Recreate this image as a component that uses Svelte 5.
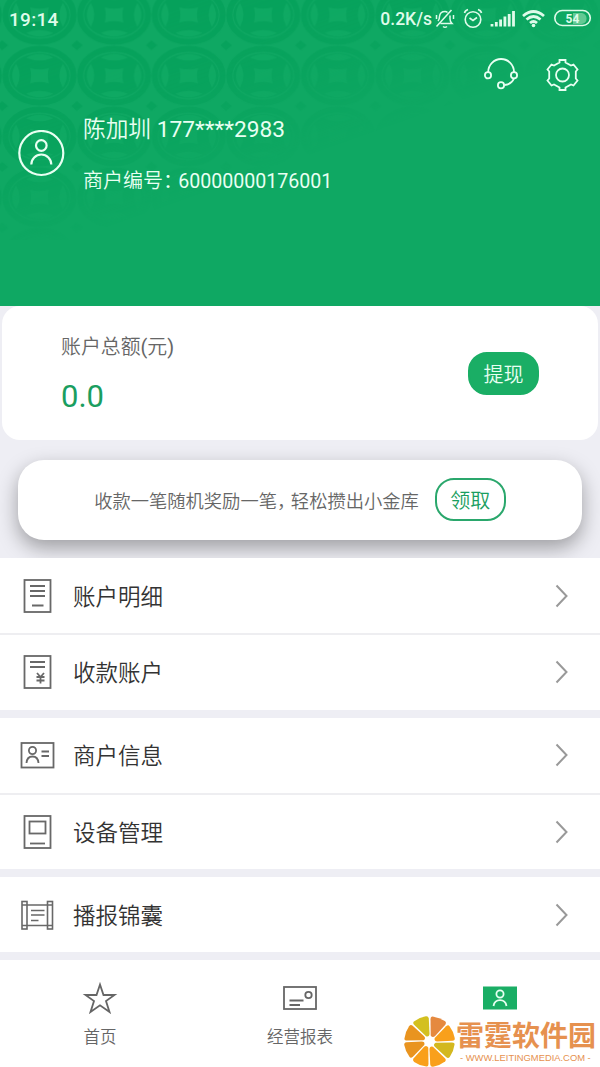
<script>
    const account = {
        name: '陈加圳',
        phone: '177****2983',
        merchantNo: '60000000176001',
        balance: '0.0'
    }
    const groups = [
        [
            { icon: 'detail', label: '账户明细' },
            { icon: 'payee', label: '收款账户' }
        ],
        [
            { icon: 'merchant', label: '商户信息' },
            { icon: 'device', label: '设备管理' }
        ],
        [
            { icon: 'scroll', label: '播报锦囊' }
        ]
    ]
    const tabs = [
        { icon: 'home', label: '首页' },
        { icon: 'report', label: '经营报表' },
        { icon: 'mine', label: '' }
    ]
    let active = 'mine'

    const slices = ['#e5893f', '#f9a01b', '#d3b81f', '#f9a01b', '#f9a01b', '#e9941f', '#e9941f', '#d3c01f']
</script>

<div class="app">
    <header class="header">
        <svg class="pattern" width="600" height="306" viewBox="0 0 600 306">
            <defs>
                <pattern id="coins" x="2.2" y="-15.500" width="74.6" height="60.8" patternUnits="userSpaceOnUse">
                    <ellipse cx="37.3" cy="30.4" rx="34" ry="27" fill="none" stroke="#06a15b" stroke-width="6" />
                    <ellipse cx="37.3" cy="30.4" rx="30" ry="22.500" fill="#06a15b" />
                    <g fill="#0fa963">
                        <path d="M24 12.500Q37.300 5 51 12.500Q37.300 18 24 12.500ZM24 48.300Q37.300 55.800 51 48.300Q37.300 42.800 24 48.300Z" />
                        <path d="M14 18.500Q6 30.400 14 42.300Q21 30.400 14 18.500ZM60.600 18.500Q68.600 30.400 60.600 42.300Q53.600 30.400 60.600 18.500Z" />
                        <path d="M28 23Q37.300 25.500 46.600 23Q44.500 30.400 46.600 38Q37.300 35.500 28 38Q30 30.400 28 23Z" />
                    </g>
                    <path d="M0 -5L6 0L0 5L-6 0ZM74.6 -5L80 0L74.6 5L69 0ZM0 55.8L6 60.8L0 66L-6 60.8ZM74.6 55.8L80 60.8L74.6 66L69 60.8Z" fill="#06a15b" />
                </pattern>
                <linearGradient id="fade" gradientUnits="userSpaceOnUse" x1="180" y1="0" x2="255" y2="210">
                    <stop offset="0" stop-color="#fff" />
                    <stop offset="0.38" stop-color="#fff" stop-opacity="0.75" />
                    <stop offset="0.85" stop-color="#fff" stop-opacity="0" />
                </linearGradient>
                <mask id="fadeMask">
                    <rect width="600" height="306" fill="url(#fade)" />
                </mask>
            </defs>
            <rect width="600" height="240" fill="url(#coins)" mask="url(#fadeMask)" />
        </svg>
        <div class="status">
            <span class="time">19:14</span>
            <span class="speed">0.2K/s</span>
            <svg class="statusIcons" width="164" height="24" viewBox="0 0 164 24" fill="none" stroke="#dffbea" stroke-width="1.6">
                <!-- muted bell -->
                <path d="M6 14Q7.500 12.500 7.500 9.500Q8 4.500 13 4.500Q14.500 4.500 15.500 5.500M18 8.500V12Q18 14.500 20 16.500H8.500M11 19.500Q13 21 15 19.500M4.500 19.500L19.500 3M4.500 8V12M21.500 8V12" stroke-width="1.500" />
                <!-- alarm -->
                <circle cx="41" cy="12.500" r="7.800" />
                <path d="M37.500 11L41 13.500L45 10.500M32.500 6Q33 3.500 36 2.500M49.500 6Q49 3.500 46 2.500" />
                <!-- signal -->
                <path d="M60 19.500V17M64.300 19.500V15M68.600 19.500V12.500M72.900 19.500V9.500M77.200 19.500V7M81.500 19.500V4" stroke-width="2.800" />
                <!-- wifi -->
                <path d="M91 9Q101.500 0 112 9M94.500 12.500Q101.500 6.500 108.500 12.500M98 16Q101.500 13 105 16" stroke-width="2.800" />
                <circle cx="101.500" cy="18.500" r="1.800" fill="#dffbea" stroke="none" />
                <!-- battery -->
                <path d="M141 6H150Q154.500 7 154.500 11.500T150 17H141Z" fill="#63c994" stroke="none" />
                <rect x="122.800" y="3.500" width="35.500" height="15" rx="7.500" />
                <text x="140.500" y="15.500" text-anchor="middle" class="battery">54</text>
            </svg>
        </div>
        <div class="actions">
            <svg width="36" height="36" viewBox="0 0 36 36" fill="none" stroke="#e8fff2" stroke-width="1.800">
                <path d="M5.200 15A12.900 13 0 0 1 31 15M31 21.500Q28.500 27.500 21.500 28" />
                <circle cx="5" cy="18.300" r="3.100" />
                <circle cx="31" cy="18.300" r="3.100" />
                <circle cx="18" cy="28.300" r="3.100" />
            </svg>
            <svg width="36" height="36" viewBox="0 0 36 36" fill="none" stroke="#e8fff2" stroke-width="1.800">
                <circle cx="17.500" cy="18" r="6.500" />
                <path d="M14.500 3H20.500V5.500L26 8.500L28.500 7.500L32.500 12.500L30.800 14.500V21.500L32.500 23.500L28.500 28.500L26 27.500L20.500 30.500V33H14.500V30.500L9 27.500L6.500 28.500L2.500 23.500L4.200 21.500V14.500L2.500 12.500L6.500 7.500L9 8.500L14.500 5.500Z" />
            </svg>
        </div>
        <div class="profile">
            <svg width="48" height="48" viewBox="0 0 48 48" fill="none" stroke="#e8fff2" stroke-width="2.200">
                <circle cx="24.300" cy="23" r="22" />
                <circle cx="24.300" cy="15.500" r="5.300" />
                <path d="M14.300 34.500A10 10 0 0 1 34.300 34.500" />
            </svg>
            <div class="who">
                <div class="name">{account.name} {account.phone}</div>
                <div class="merchant">商户编号<span class="tight">：</span><span class="number">{account.merchantNo}</span></div>
            </div>
        </div>
    </header>

    <section class="balance">
        <div>
            <div class="caption">账户总额(元)</div>
            <div class="amount">{account.balance}</div>
        </div>
        <button class="pill filled">提现</button>
    </section>

    <section class="promo">
        <span class="promoText">收款一笔随机奖励一笔<span class="tight">，</span>轻松攒出小金库</span>
        <button class="pill">领取</button>
    </section>

    <main class="list">
        {#each groups as group}
            <div class="group">
                {#each group as item}
                    <div class="row">
                        <svg width="36" height="36" viewBox="0 0 36 36" fill="none" stroke="#686868" stroke-width="1.800">
                            {#if item.icon == 'detail'}
                                <rect x="5.500" y="2" width="26" height="32" />
                                <path d="M11 8H26M11 13H26M11 18H26M13 27.500H24.500" />
                            {:else if item.icon == 'payee'}
                                <rect x="5.500" y="2" width="26" height="32" />
                                <path d="M11 8H26M11 13H26M18 19L21.500 23L25 19M17.500 23H25.500M17.500 26.500H25.500M21.500 23V29.500" />
                            {:else if item.icon == 'merchant'}
                                <rect x="2.500" y="6" width="32" height="24.500" />
                                <circle cx="13.500" cy="13.500" r="3.600" />
                                <path d="M7.500 26Q8 19.500 13.500 19.500T19.500 26M22.500 14.500H30M22.500 19H30" />
                            {:else if item.icon == 'device'}
                                <rect x="5.500" y="2" width="26" height="32" />
                                <rect x="10.500" y="7.500" width="16" height="12" />
                                <path d="M11 29.500H26" />
                            {:else}
                                <g stroke-width="1.600">
                                    <rect x="3" y="4.500" width="5" height="27.500" />
                                    <rect x="28.500" y="4.500" width="5" height="27.500" />
                                    <path d="M3 8H33.500M3 28.500H33.500M12 13.500H25.500M12 18H25.500M12 23.500H19.500" />
                                </g>
                            {/if}
                        </svg>
                        <span class="label">{item.label}</span>
                        <svg class="chevron" width="14" height="24" viewBox="0 0 14 24" fill="none" stroke="#999" stroke-width="2">
                            <path d="M1.500 1.500L11.500 12L1.500 22.500" />
                        </svg>
                    </div>
                {/each}
            </div>
        {/each}
    </main>

    <nav class="tabs">
        {#each tabs as tab}
            <div class="tab" class:active={tab.icon == active}>
                <svg width="36" height="34" viewBox="0 0 36 34" fill="none" stroke="#666" stroke-width="1.800">
                    {#if tab.icon == 'home'}
                        <path d="M18 3.500L21.500 14H32.500L24 20L27.500 31L18 24.300L8.500 31L12 20L3.500 14H14.500Z" />
                    {:else if tab.icon == 'report'}
                        <rect x="2" y="6" width="32" height="22" />
                        <circle cx="26.500" cy="14" r="3.200" />
                        <path d="M7.500 19.500H21.500M7.500 24H18" />
                    {:else}
                        <rect x="1" y="5.500" width="34" height="23" fill="#1aae65" stroke="none" />
                        <g stroke="#e8fff2">
                            <circle cx="18" cy="13" r="3.600" />
                            <path d="M11.500 25Q12.500 19.200 18 19.200T24.500 25" />
                        </g>
                    {/if}
                </svg>
                <span>{tab.label}</span>
            </div>
        {/each}
    </nav>

    <div class="stamp">
        <svg width="53" height="53" viewBox="-26 -26 52 52">
            {#each slices as color, i}
                <path d="M1.200 -6L1 -22Q1 -24.800 3 -24.600Q10 -23.600 15 -20Q17 -18.500 15.500 -16.500L5.500 -5.500Q3 -3 1.200 -6Z" fill={color} transform="rotate({i * 45})" />
            {/each}
        </svg>
        <div class="stampText">
            <div class="stampName">雷霆软件园</div>
            <div class="stampUrl">- WWW.LEITINGMEDIA.COM -</div>
        </div>
    </div>
</div>

<style>
:global(body) {
    margin: 0;
    background: #fff;
}
.app {
    position: relative;
    display: flex;
    flex-direction: column;
    height: 1067px;
    overflow: hidden;
    background: #eeeef4;
    font-family: Roboto, "Noto Sans CJK SC DemiLight", "Noto Sans CJK SC", sans-serif;
    font-weight: 400;
    color: #333;
}
.header {
    position: relative;
    height: 306px;
    flex: none;
    background: #0fa863;
    color: #e8fff2;
}
.pattern {
    position: absolute;
    top: 0;
    left: 0;
}
.status {
    position: relative;
    display: flex;
    align-items: center;
    height: 38px;
    padding: 0 4px 0 9px;
    color: #dffbea;
}
.time {
    font-size: 19px;
    font-weight: 500;
    letter-spacing: .3px;
}
.speed {
    margin-left: auto;
    font-size: 17.5px;
    font-weight: 500;
}
.battery {
    font-size: 12px;
    font-weight: 700;
    fill: #dffbea;
    stroke: none;
}
.actions {
    position: relative;
    display: flex;
    justify-content: flex-end;
    gap: 26px;
    padding: 19px 19px 0 0;
    height: 36px;
}
.profile {
    position: relative;
    display: flex;
    align-items: center;
    gap: 18px;
    padding: 17px 0 0 17px;
}
.who {
    display: flex;
    flex-direction: column;
    gap: 21px;
    padding-top: 5px;
}
.name {
    font-size: 22.7px;
    line-height: 30px;
}
.merchant {
    font-size: 20px;
    line-height: 30px;
}
.number {
    font-size: 19.6px;
}
.tight {
    letter-spacing: -.24em;
}
.balance {
    display: flex;
    flex: none;
    align-items: center;
    justify-content: space-between;
    box-sizing: border-box;
    height: 134px;
    margin: 0 2px;
    padding: 0 59px;
    border-radius: 18px;
    background: #fff;
}
.caption {
    padding-top: 5px;
    font-size: 19.9px;
    line-height: 28px;
    color: #666;
}
.amount {
    margin-top: 15px;
    font-size: 31px;
    line-height: 40px;
    color: #1a9e60;
}
.pill {
    box-sizing: border-box;
    width: 71px;
    height: 43px;
    padding: 0;
    border: 2px solid #2aa76c;
    border-radius: 19px;
    background: #fff;
    font: inherit;
    font-size: 20px;
    color: #1a9e60;
}
.filled {
    border-color: #1aae65;
    background: #1aae65;
    color: #e8fff2;
}
.promo {
    display: flex;
    flex: none;
    align-items: center;
    justify-content: center;
    gap: 16px;
    height: 80px;
    margin: 20px 18px 18px;
    border-radius: 26px;
    background: #fff;
    box-shadow: 0 8px 20px rgba(0, 0, 0, .34);
}
.promo .pill {
    margin-top: -1px;
}
.promoText {
    font-size: 18.3px;
    color: #666;
}
.list {
    position: relative;
}
.group {
    margin-bottom: 8px;
    background: #fff;
}
.row {
    display: flex;
    align-items: center;
    box-sizing: border-box;
    height: 75px;
    padding: 0 31px 0 19px;
}
.row + .row {
    height: 76.5px;
    border-top: 2px solid #eeeef1;
}
.label {
    margin: -2px 0 0 18px;
    font-size: 22.5px;
}
.chevron {
    margin-left: auto;
}
.tabs {
    display: flex;
    flex: 1;
    background: #fff;
}
.tab {
    display: flex;
    flex: 1;
    flex-direction: column;
    align-items: center;
    padding-top: 21px;
    font-size: 16.5px;
    color: #666;
}
.tab span {
    margin-top: 9px;
}
.stamp {
    position: absolute;
    left: 403px;
    top: 1015px;
    display: flex;
    align-items: center;
    white-space: nowrap;
    color: #e6914f;
}
.stampName {
    margin-top: -2px;
    font-family: "Noto Sans CJK SC", sans-serif;
    font-size: 28px;
    font-weight: 700;
    line-height: 32px;
}
.stampUrl {
    margin-top: 2px;
    padding-left: 4px;
    font-family: "Liberation Sans", sans-serif;
    font-size: 9.4px;
    line-height: 12px;
}
</style>
